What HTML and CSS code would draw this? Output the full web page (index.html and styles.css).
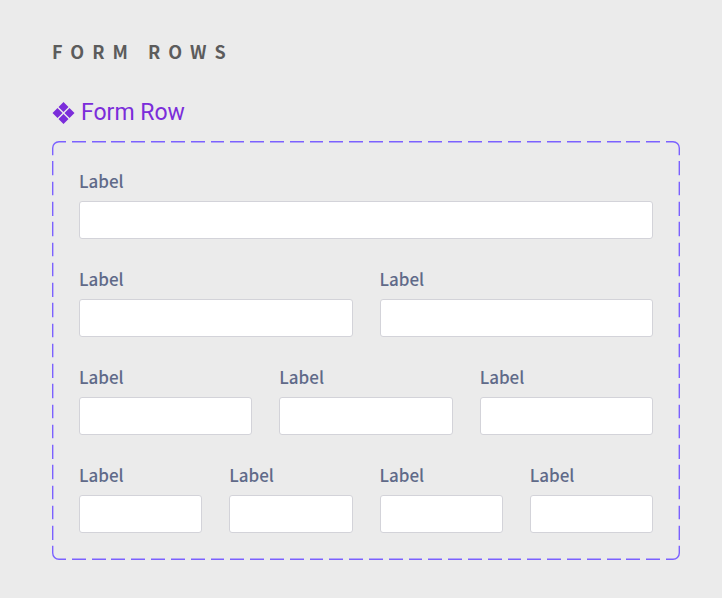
FILE: index.html
```html
<!DOCTYPE html>
<html lang="en">
<head>
    <meta charset="UTF-8">
    <meta name="viewport" content="width=device-width, initial-scale=1.0">
    <title>Form Rows</title>
    <link rel="stylesheet" href="styles.css">
</head>
<body>
    <main class="page">
        <h1 class="page-title">FORM ROWS</h1>
        <h2 class="component-name">
            <svg class="component-icon" viewBox="0 0 23 22" aria-hidden="true">
                <path d="M11.5 0l5 5-5 5-5-5zM5.5 6l5 5-5 5-5-5zM17.5 6l5 5-5 5-5-5zM11.5 12l5 5-5 5-5-5z"/>
            </svg>
            Form Row
        </h2>
        <form class="form-frame">
            <div class="form-row">
                <div class="field">
                    <label for="full">Label</label>
                    <input id="full" type="text">
                </div>
            </div>
            <div class="form-row">
                <div class="field">
                    <label for="half1">Label</label>
                    <input id="half1" type="text">
                </div>
                <div class="field">
                    <label for="half2">Label</label>
                    <input id="half2" type="text">
                </div>
            </div>
            <div class="form-row">
                <div class="field">
                    <label for="third1">Label</label>
                    <input id="third1" type="text">
                </div>
                <div class="field">
                    <label for="third2">Label</label>
                    <input id="third2" type="text">
                </div>
                <div class="field">
                    <label for="third3">Label</label>
                    <input id="third3" type="text">
                </div>
            </div>
            <div class="form-row">
                <div class="field">
                    <label for="quarter1">Label</label>
                    <input id="quarter1" type="text">
                </div>
                <div class="field">
                    <label for="quarter2">Label</label>
                    <input id="quarter2" type="text">
                </div>
                <div class="field">
                    <label for="quarter3">Label</label>
                    <input id="quarter3" type="text">
                </div>
                <div class="field">
                    <label for="quarter4">Label</label>
                    <input id="quarter4" type="text">
                </div>
            </div>
        </form>
    </main>
</body>
</html>
```

FILE: styles.css
```css
* { box-sizing: border-box; }
body { margin: 0; background-color: #ebebeb; font-family: "Noto Sans CJK SC", "Noto Sans", sans-serif; }
.page { padding: 37px 42px 38px 52px; }
.page-title { margin: 0 0 33px; font-size: 18px; line-height: 28px; font-weight: 700; letter-spacing: 8px; color: #5c5c5c; }
.component-name { display: flex; align-items: center; gap: 6px; margin: 0 0 13px; font-family: Roboto, sans-serif; font-size: 23px; line-height: 30px; font-weight: 400; color: #7b2dda; }
.component-icon { width: 23px; height: 22px; fill: currentColor; }

/* dashed frame: one dash per 20px tile, stretched to fit each side */
.form-frame {
    display: flex;
    flex-direction: column;
    gap: 27px;
    padding: 20px;
    border: 7px solid transparent;
    border-image: url("data:image/svg+xml,%3Csvg xmlns='http://www.w3.org/2000/svg' width='34' height='34' fill='none' stroke='%237b61ff' stroke-width='1.4'%3E%3Cpath d='M14 .7H7A6.3 6.3 0 0 0 .7 7v7M20 .7h7A6.3 6.3 0 0 1 33.3 7v7M.7 20v7A6.3 6.3 0 0 0 7 33.3h7M33.3 20v7a6.3 6.3 0 0 1-6.3 6.3h-7'/%3E%3C/svg%3E") 7 round;
}
.form-row { display: flex; gap: 27px; }
.field { flex: 1; min-width: 0; display: flex; flex-direction: column; gap: 8px; }
.field label { font-size: 17px; line-height: 25px; font-weight: 500; color: #606a89; }
.field input { width: 100%; height: 38px; padding: 0 10px; border: 1px solid #d3d3d9; border-radius: 3px; background-color: #fff; font: inherit; }
```
